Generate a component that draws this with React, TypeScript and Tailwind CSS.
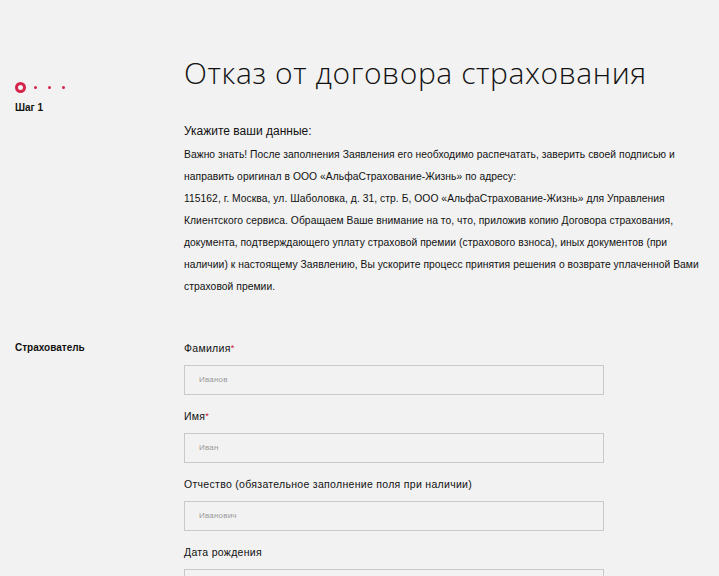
import React from "react";

const paragraph = [
  "Важно знать! После заполнения Заявления его необходимо распечатать, заверить своей подписью и",
  "направить оригинал в ООО «АльфаСтрахование-Жизнь» по адресу:",
  "115162, г. Москва, ул. Шаболовка, д. 31, стр. Б, ООО «АльфаСтрахование-Жизнь» для Управления",
  "Клиентского сервиса. Обращаем Ваше внимание на то, что, приложив копию Договора страхования,",
  "документа, подтверждающего уплату страховой премии (страхового взноса), иных документов (при",
  "наличии) к настоящему Заявлению, Вы ускорите процесс принятия решения о возврате уплаченной Вами",
  "страховой премии.",
];

const fields = [
  { label: "Фамилия", required: true, placeholder: "Иванов" },
  { label: "Имя", required: true, placeholder: "Иван" },
  { label: "Отчество (обязательное заполнение поля при наличии)", required: false, placeholder: "Иванович" },
  { label: "Дата рождения", required: false, placeholder: "" },
];

const Field = ({ label, required, placeholder }: { label: string; required: boolean; placeholder: string }) => (
  <div className="flex flex-col">
    <div className="h-[18px] text-[10.5px] tracking-[0.3px] leading-[18px] text-[#111]">
      {label}
      {required && <span className="text-[#c8102e] text-[9px] align-top">*</span>}
    </div>
    <div className="mt-[8px] h-[30px] w-[420px] border border-[#c9c9c9] bg-[#f2f2f2] flex items-center px-[14px]">
      <span className="text-[8px] tracking-[0.2px] text-[#9a9a9a]">{placeholder}</span>
    </div>
  </div>
);

export default function App() {
  return (
    <div
      className="min-h-[576px] w-full bg-[#f2f2f2] text-[#111] overflow-hidden"
      style={{ fontFamily: '"Liberation Sans", Arial, sans-serif' }}
    >
      <div className="flex pt-[54px] pl-[15px]">
        {/* steps */}
        <div className="w-[169px] shrink-0">
          <div className="mt-[28px] flex items-center">
            <div className="h-[11px] w-[11px] rounded-full border-[3px] border-[#d5254a] bg-[#f2f2f2]" />
            <div className="ml-[8px] h-[3px] w-[3px] rounded-full bg-[#d5254a]" />
            <div className="ml-[11px] h-[3px] w-[3px] rounded-full bg-[#d5254a]" />
            <div className="ml-[11px] h-[3px] w-[3px] rounded-full bg-[#d5254a]" />
          </div>
          <div className="mt-[8px] text-[10px] font-bold leading-[14px]">Шаг 1</div>
        </div>

        {/* main */}
        <div className="flex-1">
          <h1
            className="text-[30px] font-light leading-[38px] tracking-[0.6px] text-[#111]"
            style={{ fontFamily: '"Open Sans", "Liberation Sans", sans-serif' }}
          >
            Отказ от договора страхования
          </h1>
          <div className="mt-[31px] text-[12px] leading-[16px]">Укажите ваши данные:</div>
          <div className="mt-[5px] text-[10.3px] tracking-[0.05px] leading-[22px]">
            {paragraph.map((l, i) => (
              <div key={i}>{l}</div>
            ))}
          </div>
        </div>
      </div>

      <div className="flex pl-[15px] mt-[41px]">
        <div className="w-[169px] shrink-0 text-[10px] font-bold leading-[18px]">Страхователь</div>
        <div className="flex flex-col gap-[12px]">
          {fields.map((f) => (
            <Field key={f.label} {...f} />
          ))}
        </div>
      </div>
    </div>
  );
}
